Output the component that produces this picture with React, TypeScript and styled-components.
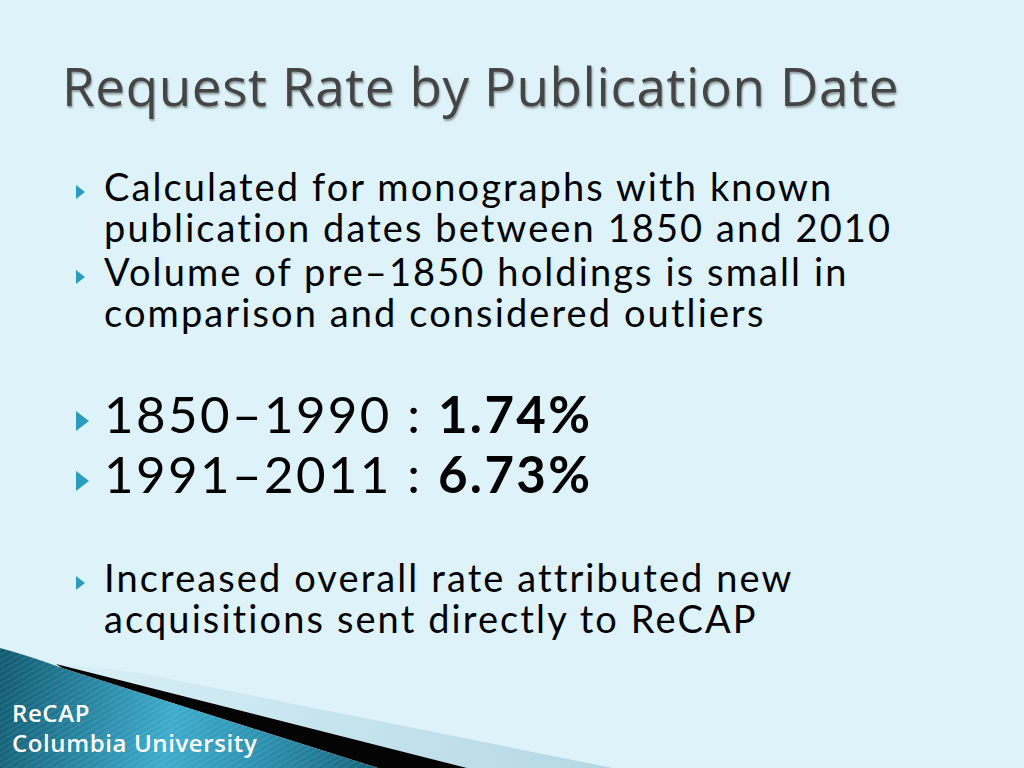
import React from 'react';
import styled, { createGlobalStyle } from 'styled-components';

const GlobalStyle = createGlobalStyle`
  html, body {
    margin: 0;
    padding: 0;
    background: #def3f9;
  }
  body {
    font-family: Lato, 'Open Sans', sans-serif;
  }
`;

const Strong = styled.b`
  font-weight: 700;
`;

type Item = { text: React.ReactNode; big?: boolean; gapBefore?: number };

const items: Item[] = [
  { text: 'Calculated for monographs with known publication dates between 1850 and 2010' },
  { text: 'Volume of pre\u20131850 holdings is small in comparison and considered outliers', gapBefore: 3 },
  {
    text: (
      <>
        1850&#8211;1990 : <Strong>1.74%</Strong>
      </>
    ),
    big: true,
    gapBefore: 51,
  },
  {
    text: (
      <>
        1991&#8211;2011 : <Strong>6.73%</Strong>
      </>
    ),
    big: true,
  },
  {
    text: 'Increased overall rate attributed new acquisitions sent directly to ReCAP',
    gapBefore: 53,
  },
];

const App = () => {
  return (
    <>
      <GlobalStyle />
      <Slide>
        <Swoosh viewBox="0 0 1024 120" preserveAspectRatio="none">
          <defs>
            <linearGradient id="teal" gradientUnits="userSpaceOnUse" x1="0" y1="40" x2="380" y2="120">
              <stop offset="0" stopColor="#125d74" />
              <stop offset="0.45" stopColor="#3dabcc" />
              <stop offset="0.7" stopColor="#2c8fae" />
              <stop offset="1" stopColor="#15637a" />
            </linearGradient>
            <linearGradient id="pale" gradientUnits="userSpaceOnUse" x1="100" y1="0" x2="613" y2="120">
              <stop offset="0" stopColor="#d6eef5" />
              <stop offset="1" stopColor="#b4d8e5" />
            </linearGradient>
            <pattern id="lines" width="5" height="5" patternUnits="userSpaceOnUse" patternTransform="rotate(60)">
              <rect width="2" height="5" fill="#ffffff" opacity="0.07" />
            </pattern>
          </defs>
          <path d="M60 16 Q100 19 140 25 L613 120 L467 120 Z" fill="url(#pale)" />
          <path d="M56 16 L467 120 L378 120 L62 20 Z" fill="#040404" />
          <path d="M0 0 Q30 8 62 20 L378 120 L0 120 Z" fill="url(#teal)" />
          <path d="M0 0 Q30 8 62 20 L378 120 L0 120 Z" fill="url(#lines)" />
        </Swoosh>
        <Title>Request Rate by Publication Date</Title>
        <List>
          {items.map((item, i) => (
            <Bullet key={i} $big={item.big} $gap={item.gapBefore ?? 0}>
              <Marker $big={item.big} />
              <span>{item.text}</span>
            </Bullet>
          ))}
        </List>
        <Footer>
          <div>ReCAP</div>
          <div>Columbia University</div>
        </Footer>
      </Slide>
    </>
  );
};

export default App;

const Slide = styled.div`
  position: relative;
  width: 1024px;
  height: 768px;
  overflow: hidden;
  background: #def3f9;
  display: flex;
  flex-direction: column;
`;

const Swoosh = styled.svg`
  position: absolute;
  left: 0;
  bottom: 0;
  width: 1024px;
  height: 120px;
`;

const Title = styled.h1`
  margin: 54px 0 0 62px;
  font-family: 'Open Sans', sans-serif;
  font-weight: 500;
  font-size: 53px;
  line-height: 64px;
  letter-spacing: 0.6px;
  color: #454545;
  text-shadow: 1px 2px 2px rgba(0, 0, 0, 0.35);
`;

const List = styled.ul`
  list-style: none;
  margin: 0;
  padding: 48px 40px 0 76px;
  color: #000;
`;

const Bullet = styled.li<{ $big?: boolean; $gap: number }>`
  display: flex;
  align-items: flex-start;
  margin-top: ${(p) => p.$gap}px;
  font-size: ${(p) => (p.$big ? 51 : 38)}px;
  line-height: ${(p) => (p.$big ? 60 : 41)}px;
  letter-spacing: ${(p) => (p.$big ? 2.4 : 2.1)}px;
`;

const Marker = styled.span<{ $big?: boolean }>`
  flex: none;
  width: 0;
  height: 0;
  margin-top: ${(p) => (p.$big ? 27 : 19)}px;
  margin-right: ${(p) => (p.$big ? 15 : 19)}px;
  border-top: ${(p) => (p.$big ? 10.5 : 7.5)}px solid transparent;
  border-bottom: ${(p) => (p.$big ? 10.5 : 7.5)}px solid transparent;
  border-left: ${(p) => (p.$big ? 13 : 9)}px solid #2a9cbe;
`;

const Footer = styled.div`
  position: relative;
  margin-top: auto;
  padding: 0 0 10px 12px;
  color: #fff;
  font-family: 'Open Sans', sans-serif;
  font-weight: 600;
  font-size: 24px;
  line-height: 30px;
  letter-spacing: 0.6px;
`;
